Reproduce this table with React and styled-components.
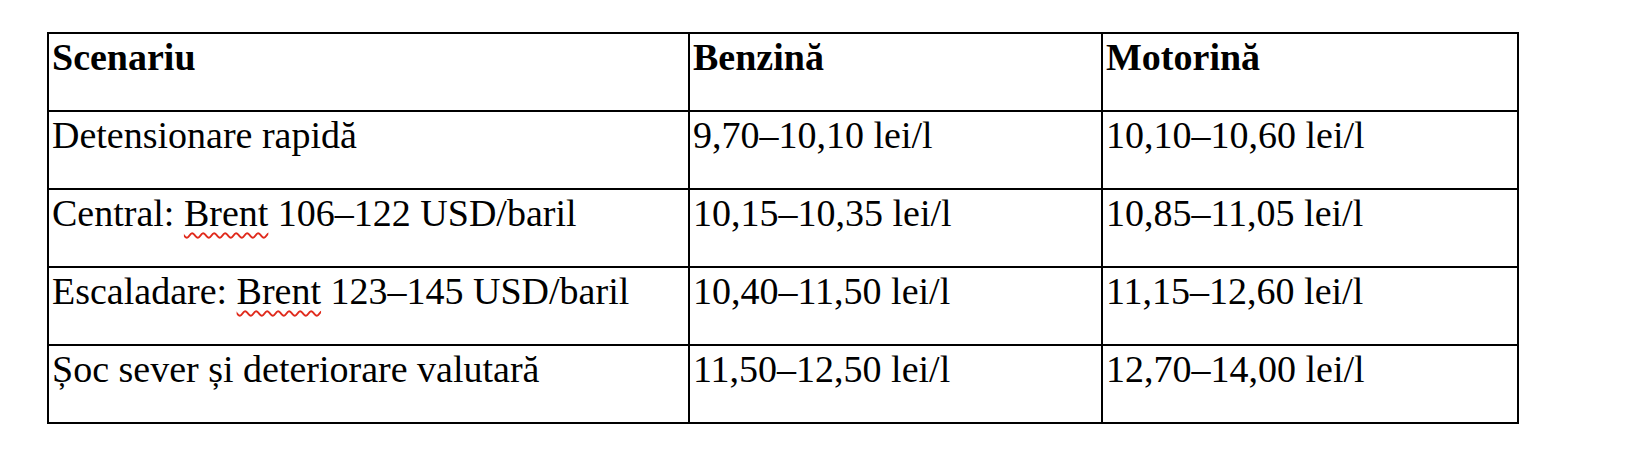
import styled, { createGlobalStyle } from 'styled-components';

const GlobalStyle = createGlobalStyle`
  body {
    margin: 0;
    background: #ffffff;
    font-family: "Liberation Serif", serif;
    color: #000000;
  }
`;

const rows = [
  { scenario: 'Detensionare rapidă', benzina: '9,70–10,10 lei/l', motorina: '10,10–10,60 lei/l' },
  { scenario: ['Central: ', 'Brent', ' 106–122 USD/baril'], benzina: '10,15–10,35 lei/l', motorina: '10,85–11,05 lei/l' },
  { scenario: ['Escaladare: ', 'Brent', ' 123–145 USD/baril'], benzina: '10,40–11,50 lei/l', motorina: '11,15–12,60 lei/l' },
  { scenario: 'Șoc sever și deteriorare valutară', benzina: '11,50–12,50 lei/l', motorina: '12,70–14,00 lei/l' }
];

export default function App() {
  return (
    <>
      <GlobalStyle />
      <Page>
        <Table>
          <colgroup>
            <col style={{ width: 641 }} />
            <col style={{ width: 413 }} />
            <col style={{ width: 416 }} />
          </colgroup>
          <thead>
            <Row>
              <Head>Scenariu</Head>
              <Head>Benzină</Head>
              <Head>Motorină</Head>
            </Row>
          </thead>
          <tbody>
            {rows.map((r, i) => (
              <Row key={i}>
                <Cell>
                  {Array.isArray(r.scenario) ? (
                    <>
                      {r.scenario[0]}
                      <Misspelled>{r.scenario[1]}</Misspelled>
                      {r.scenario[2]}
                    </>
                  ) : (
                    r.scenario
                  )}
                </Cell>
                <Cell>{r.benzina}</Cell>
                <Cell>{r.motorina}</Cell>
              </Row>
            ))}
          </tbody>
        </Table>
      </Page>
    </>
  );
}

const Page = styled.div`
  padding: 32px 0 0 47px;
  height: 450px;
  box-sizing: border-box;
`;

const Table = styled.table`
  border-collapse: collapse;
  table-layout: fixed;
  width: 1470px;
  font-family: "Liberation Serif", serif;
  font-size: 38px;
`;

const Row = styled.tr`
  height: 78px;
`;

const Cell = styled.td`
  border: 2px solid #000;
  padding: 2px 2px 0 3px;
  vertical-align: top;
  text-align: left;
  white-space: nowrap;
  line-height: 1.15;
  font-family: "Liberation Serif", serif;
  font-weight: 400;
  color: #000;
`;

const Head = styled(Cell).attrs({ as: 'th' })`
  font-weight: 700;
`;

const Misspelled = styled.span`
  text-decoration: underline wavy #e02a1c;
  text-decoration-thickness: 1.5px;
  text-underline-offset: 6px;
`;
